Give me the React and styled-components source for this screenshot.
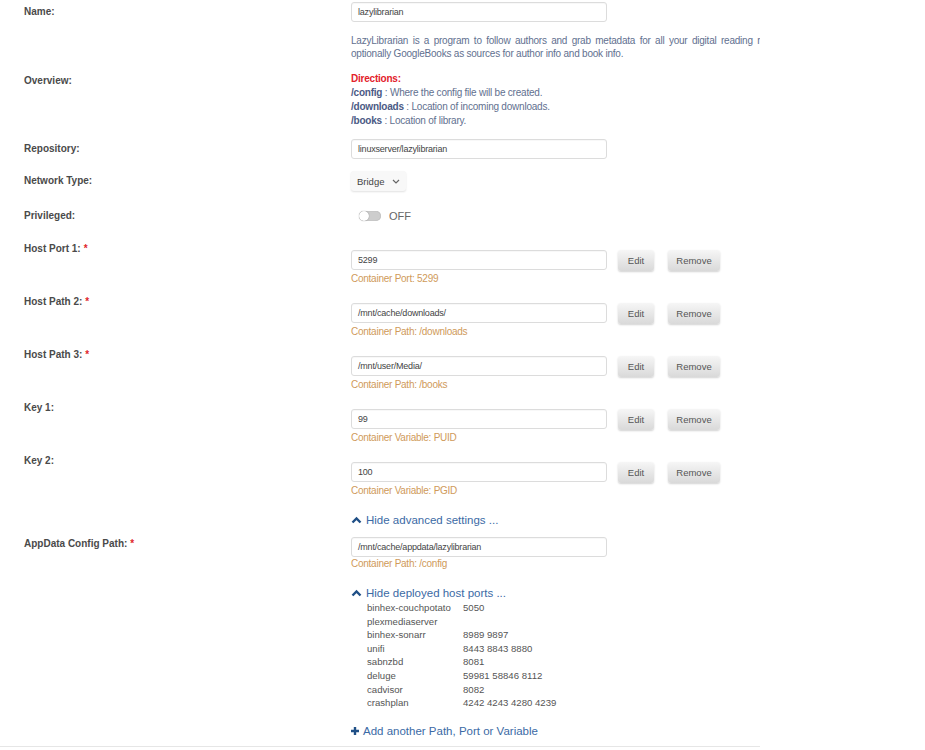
import React from "react";
import styled, { createGlobalStyle } from "styled-components";

const GlobalStyle = createGlobalStyle`
  body {
    margin: 0;
    background: #fff;
    font-family: "Liberation Sans", Arial, sans-serif;
  }
`;

const Page = styled.div`
  width: 760px;
  overflow: hidden;
  padding-top: 2px;
  padding-bottom: 7px;
  border-bottom: 1px solid #e6e6e6;
`;

const Row = styled.div`
  display: grid;
  grid-template-columns: 351px 1fr;
  margin-top: ${(p) => p.$gap || 0}px;
  align-items: start;
`;

const Label = styled.div`
  padding-left: 24px;
  font-size: 10px;
  font-weight: bold;
  color: #4a4a4a;
  line-height: ${(p) => p.$lh || 14}px;
  padding-top: ${(p) => p.$top || 0}px;
`;

const Req = styled.span`
  color: #e0262b;
  margin-left: 3px;
`;

const Content = styled.div`
  padding-top: ${(p) => p.$top || 0}px;
  min-width: 0;
`;

const Input = styled.div`
  box-sizing: border-box;
  width: 256px;
  height: 20px;
  border: 1px solid #dcdcdc;
  border-radius: 3px;
  padding: 0 6px;
  font-size: 9px;
  letter-spacing: -0.2px;
  line-height: 18px;
  color: #444;
  background: #fff;
  box-shadow: inset 0 1px 1px rgba(0, 0, 0, 0.03);
`;

const FieldLine = styled.div`
  display: flex;
  align-items: center;
  height: 20px;
`;

const Button = styled.div`
  box-sizing: border-box;
  height: 21px;
  width: ${(p) => p.$w}px;
  margin-left: ${(p) => p.$ml}px;
  border-radius: 3px;
  background: linear-gradient(#f6f6f6, #d9d9d9);
  box-shadow: 0 1px 2px rgba(0, 0, 0, 0.18);
  font-size: 9.5px;
  color: #555;
  display: flex;
  align-items: center;
  justify-content: center;
`;

const Note = styled.div`
  font-size: 10px;
  letter-spacing: -0.25px;
  line-height: 14px;
  margin-top: ${(p) => (p.$tight ? 0 : 2)}px;
  color: #cf9a5a;
`;

const Desc = styled.div`
  font-size: 10px;
  letter-spacing: -0.22px;
  line-height: 13px;
  color: #62708f;
  white-space: nowrap;
`;

const DescLine = styled.div`
  word-spacing: ${(p) => p.$ws || 0}px;
`;

const Directions = styled.div`
  font-size: 10px;
  letter-spacing: -0.22px;
  line-height: 14px;
  color: #62708f;
`;

const Red = styled.div`
  color: #e3212b;
  font-weight: bold;
`;

const Key = styled.b`
  color: #4b5a85;
`;

const Select = styled.div`
  box-sizing: border-box;
  width: 55px;
  height: 20px;
  border-radius: 3px;
  background: #f8f8f8;
  box-shadow: 0 1px 2px rgba(0, 0, 0, 0.12);
  display: flex;
  align-items: center;
  justify-content: space-between;
  padding: 0 6px;
  font-size: 9.5px;
  color: #444;
`;

const Toggle = styled.div`
  display: flex;
  align-items: center;
  height: 20px;
  padding-left: 8px;
  gap: 8px;
  font-size: 11px;
  color: #666;
`;

const Track = styled.div`
  position: relative;
  width: 22px;
  height: 10px;
  border-radius: 5px;
  background: #cdcdcd;
  box-shadow: inset 0 0 1px rgba(0, 0, 0, 0.3);
`;

const Knob = styled.div`
  position: absolute;
  left: 0;
  top: 0;
  width: 10px;
  height: 10px;
  border-radius: 50%;
  background: #fff;
  box-shadow: 0 0 1px rgba(0, 0, 0, 0.5);
`;

const LinkLine = styled.div`
  display: flex;
  align-items: center;
  gap: 4px;
  font-size: 11.5px;
  line-height: 16px;
  color: #3b6aa5;
  margin-top: ${(p) => p.$gap || 0}px;
`;

const PortTable = styled.div`
  display: grid;
  grid-template-columns: 96px auto;
  padding-left: 16px;
  font-size: 9.6px;
  line-height: 13.6px;
  color: #555;
`;

const Chevron = () => (
  <svg width="11" height="8" viewBox="0 0 11 8">
    <path d="M1.5 6.5 L5.5 2.5 L9.5 6.5" fill="none" stroke="#1f4f86" strokeWidth="2.4" />
  </svg>
);

const Plus = () => (
  <svg width="8" height="8" viewBox="0 0 8 8">
    <path d="M4 0 V8 M0 4 H8" stroke="#1f4f86" strokeWidth="2.4" />
  </svg>
);

const Caret = () => (
  <svg width="8" height="5" viewBox="0 0 8 5">
    <path d="M1 1 L4 4 L7 1" fill="none" stroke="#666" strokeWidth="1.2" />
  </svg>
);

const mappings = [
  ["Host Port 1:", "5299", "Container Port: 5299", true],
  ["Host Path 2:", "/mnt/cache/downloads/", "Container Path: /downloads", true],
  ["Host Path 3:", "/mnt/user/Media/", "Container Path: /books", true],
  ["Key 1:", "99", "Container Variable: PUID", false],
  ["Key 2:", "100", "Container Variable: PGID", false],
];

const ports = [
  ["binhex-couchpotato", "5050"],
  ["plexmediaserver", ""],
  ["binhex-sonarr", "8989 9897"],
  ["unifi", "8443 8843 8880"],
  ["sabnzbd", "8081"],
  ["deluge", "59981 58846 8112"],
  ["cadvisor", "8082"],
  ["crashplan", "4242 4243 4280 4239"],
];

export default function App() {
  return (
    <>
      <GlobalStyle />
      <Page>
        <Row>
          <Label $lh={20}>Name:</Label>
          <Content>
            <Input>lazylibrarian</Input>
          </Content>
        </Row>

        <Row $gap={12}>
          <div />
          <Desc>
            <DescLine $ws={1.9}>
              LazyLibrarian is a program to follow authors and grab metadata for all your digital reading r
            </DescLine>
            <DescLine>optionally GoogleBooks as sources for author info and book info.</DescLine>
          </Desc>
        </Row>

        <Row $gap={12}>
          <Label $top={2}>Overview:</Label>
          <Directions>
            <Red>Directions:</Red>
            <div>
              <Key>/config</Key> : Where the config file will be created.
            </div>
            <div>
              <Key>/downloads</Key> : Location of incoming downloads.
            </div>
            <div>
              <Key>/books</Key> : Location of library.
            </div>
          </Directions>
        </Row>

        <Row $gap={11}>
          <Label $lh={20}>Repository:</Label>
          <Content>
            <Input>linuxserver/lazylibrarian</Input>
          </Content>
        </Row>

        <Row $gap={12}>
          <Label $lh={20}>Network Type:</Label>
          <Content>
            <Select>
              Bridge <Caret />
            </Select>
          </Content>
        </Row>

        <Row $gap={15}>
          <Label $lh={20}>Privileged:</Label>
          <Toggle>
            <Track>
              <Knob />
            </Track>
            OFF
          </Toggle>
        </Row>

        {mappings.map(([label, value, note, req], i) => (
          <Row key={label} $gap={i === 0 ? 15 : 8}>
            <Label $top={1}>
              {label}
              {req && <Req>*</Req>}
            </Label>
            <Content $top={9}>
              <FieldLine>
                <Input>{value}</Input>
                <Button $w={36} $ml={11}>Edit</Button>
                <Button $w={52} $ml={14}>Remove</Button>
              </FieldLine>
              <Note>{note}</Note>
            </Content>
          </Row>
        ))}

        <Row $gap={14}>
          <div />
          <LinkLine>
            <Chevron /> Hide advanced settings ...
          </LinkLine>
        </Row>

        <Row $gap={9}>
          <Label>
            AppData Config Path:<Req>*</Req>
          </Label>
          <Content>
            <Input>/mnt/cache/appdata/lazylibrarian</Input>
            <Note $tight>Container Path: /config</Note>
          </Content>
        </Row>

        <Row $gap={14}>
          <div />
          <div>
            <LinkLine>
              <Chevron /> Hide deployed host ports ...
            </LinkLine>
            <PortTable>
              {ports.map(([name, port]) => (
                <React.Fragment key={name}>
                  <span>{name}</span>
                  <span>{port}</span>
                </React.Fragment>
              ))}
            </PortTable>
            <LinkLine $gap={13}>
              <Plus /> Add another Path, Port or Variable
            </LinkLine>
          </div>
        </Row>
      </Page>
    </>
  );
}
